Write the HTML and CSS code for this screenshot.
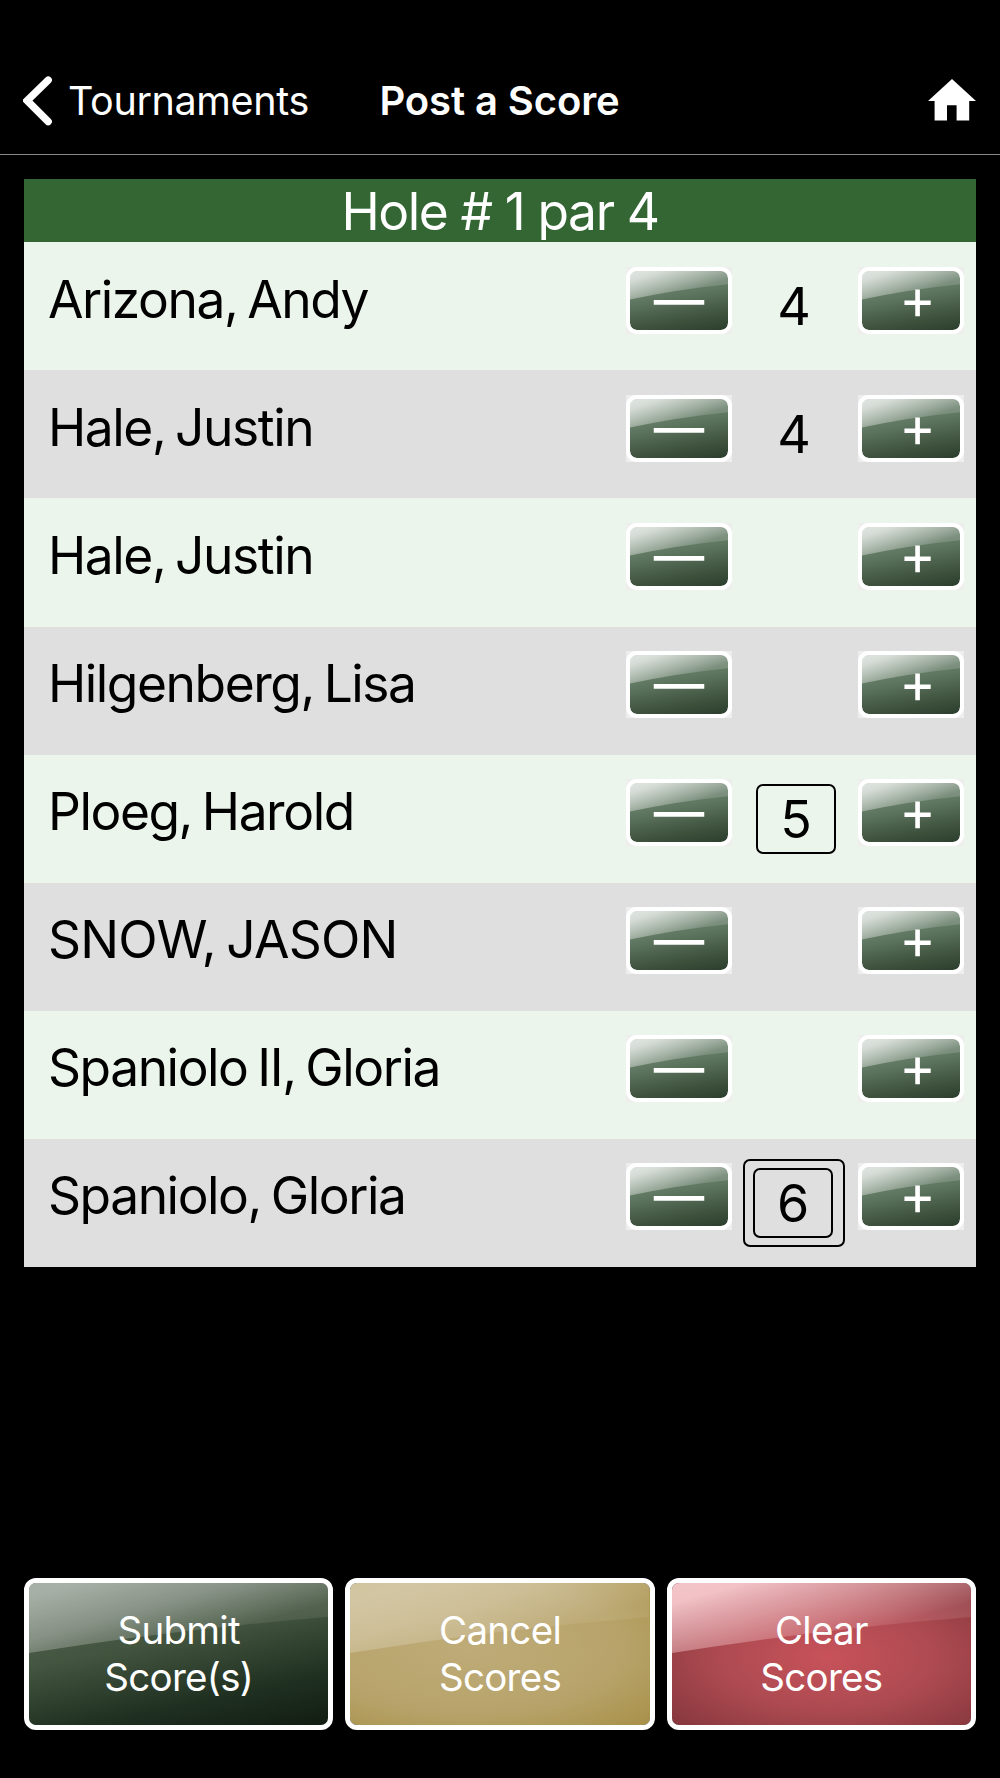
FILE: index.html
```html
<!DOCTYPE html>
<html lang="en">
<head>
    <meta charset="UTF-8">
    <meta name="viewport" content="width=device-width, initial-scale=1.0">
    <title>Post a Score</title>
    <link rel="stylesheet" href="styles.css">
</head>
<body>
    <!-- shared shapes -->
    <svg class="defs" width="0" height="0">
        <defs>
            <linearGradient id="shine" gradientUnits="userSpaceOnUse" x1="0" y1="0" x2="26" y2="95">
                <stop offset="0" stop-color="#fff" stop-opacity="0.8"/>
                <stop offset="0.15" stop-color="#fff" stop-opacity="0.78"/>
                <stop offset="0.55" stop-color="#fff" stop-opacity="0.56"/>
                <stop offset="1" stop-color="#fff" stop-opacity="0.14"/>
            </linearGradient>
            <linearGradient id="shine-pink" gradientUnits="userSpaceOnUse" x1="0" y1="0" x2="26" y2="95">
                <stop offset="0" stop-color="#facdd1" stop-opacity="0.94"/>
                <stop offset="0.2" stop-color="#facdd1" stop-opacity="0.92"/>
                <stop offset="0.55" stop-color="#f5c4c8" stop-opacity="0.62"/>
                <stop offset="1" stop-color="#f5c4c8" stop-opacity="0.14"/>
            </linearGradient>
            <linearGradient id="shine-small" gradientUnits="userSpaceOnUse" x1="0" y1="0" x2="12" y2="36">
                <stop offset="0" stop-color="#fff" stop-opacity="0.76"/>
                <stop offset="0.25" stop-color="#fff" stop-opacity="0.7"/>
                <stop offset="1" stop-color="#fff" stop-opacity="0.16"/>
            </linearGradient>
            <symbol id="gloss" viewBox="0 0 300 142" preserveAspectRatio="none">
                <path d="M0 0H300V34Q150 46 0 70Z" fill="url(#shine)"/>
            </symbol>
            <symbol id="gloss-pink" viewBox="0 0 300 142" preserveAspectRatio="none">
                <path d="M0 0H300V34Q150 46 0 70Z" fill="url(#shine-pink)"/>
            </symbol>
            <symbol id="gloss-small" viewBox="0 0 97 58" preserveAspectRatio="none">
                <path d="M0 0H97V13Q48 18 0 28Z" fill="url(#shine-small)"/>
            </symbol>
            <symbol id="dash" viewBox="0 0 97 58">
                <path d="M23.5 30.9H73.5" stroke="#fff" stroke-width="4.6"/>
            </symbol>
            <symbol id="cross" viewBox="0 0 97 58">
                <path d="M42 31.2H68M55 18V44.7" stroke="#fff" stroke-width="4.6"/>
            </symbol>
        </defs>
    </svg>

    <div class="topbar">
        <a class="back">
            <svg class="chevron" viewBox="0 0 30 50"><path d="M25.2 4.1L4.2 24.6L25.2 45.6" fill="none" stroke="#fff" stroke-width="7.4" stroke-linecap="round"/></svg>
            <span class="back-text">Tournaments</span>
        </a>
        <h1>Post a Score</h1>
        <svg class="home" viewBox="0 0 48 42"><path d="M24 0L48 22H41.2V41.5H28.6V26.3H19V41.5H6.6V22H0Z" fill="#fff"/></svg>
    </div>

    <div class="card">
        <h2>Hole # 1 par 4</h2>
        <div id="players"></div>
    </div>

    <div class="actions">
        <button class="action submit"><svg class="shine"><use href="#gloss"/></svg><span>Submit<br>Score(s)</span></button>
        <button class="action cancel"><svg class="shine"><use href="#gloss"/></svg><span>Cancel<br>Scores</span></button>
        <button class="action clear"><svg class="shine"><use href="#gloss-pink"/></svg><span>Clear<br>Scores</span></button>
    </div>

    <script src="script.js"></script>
</body>
</html>
```
FILE: styles.css
```css
* {
    box-sizing: border-box;
}

body {
    margin: 0;
    width: 1000px;
    height: 1778px;
    overflow: hidden;
    background-color: #000;
    color: #fff;
    font-family: Inter, "Liberation Sans", sans-serif;
    display: flex;
    flex-direction: column;
}

h1, h2 {
    margin: 0;
    font-weight: 400;
}

.defs {
    position: absolute;
}

/* top bar */
.topbar {
    height: 155px;
    padding: 47px 24px 0 23px;
    border-bottom: 1px solid #888;
    display: grid;
    grid-template-columns: 1fr auto 1fr;
    align-items: center;
}

.back {
    display: flex;
    align-items: center;
    height: 107px;
}

.chevron {
    width: 30px;
    height: 50px;
    flex: none;
}

.back-text {
    margin-left: 15px;
    font-size: 39.5px;
    letter-spacing: -0.35px;
}

h1 {
    font-size: 40px;
    font-weight: 600;
    letter-spacing: -0.1px;
}

.home {
    width: 48px;
    height: 42px;
    justify-self: end;
    margin-bottom: 1px;
}

/* score table */
.card {
    margin: 24px 24px 0;
}

h2 {
    height: 63.4px;
    background-color: #336633;
    font-size: 51.5px;
    line-height: 64px;
    letter-spacing: -1.4px;
    text-align: center;
}

.player {
    height: 128.05px;
    padding: 24.3px 12.5px 0 24px;
    background-color: #ebf5eb;
    color: #000;
    display: flex;
    align-items: flex-start;
}

.player:nth-child(even) {
    background-color: #dfdfdf;
}

.name {
    flex: 1;
    font-size: 51.5px;
    line-height: 64px;
    letter-spacing: -1.45px;
    word-spacing: -3.2px;
    white-space: nowrap;
}

.name.caps {
    letter-spacing: -0.8px;
}

.step {
    width: 106px;
    height: 67px;
    flex: none;
    background-color: #eee;
}

.step button {
    display: block;
    width: 106px;
    height: 67px;
    padding: 0;
    border: 4.5px solid #fff;
    border-radius: 11px;
    background: linear-gradient(170deg, #7d927e 0%, #5f7761 42%, #40543f 75%, #2c3d2d 100%) padding-box;
    overflow: hidden;
    position: relative;
}

.step svg, .shine {
    position: absolute;
    left: 0;
    top: 0;
    width: 100%;
    height: 100%;
}

.score {
    width: 126px;
    height: 80px;
    flex: none;
    display: flex;
    justify-content: center;
    padding-right: 1px;
    font-size: 52px;
    line-height: 79px;
}

.box, .double {
    width: 80px;
    height: 70px;
    margin: 5px 0 0 4px;
    border: 2px solid #000;
    border-radius: 7px;
    line-height: 67px;
    text-align: center;
}

.double {
    flex: none;
    width: 102px;
    height: 88px;
    margin: -4px 0 0;
    padding-right: 2px;
    line-height: 85px;
    position: relative;
}

.double::before {
    content: "";
    position: absolute;
    left: 8px;
    right: 10px;
    top: 7px;
    height: 66px;
    border: 2px solid #000;
    border-radius: 7px;
}

/* bottom buttons */
.actions {
    margin: auto 24px 48px;
    display: flex;
    gap: 12px;
}

.action {
    flex: 1;
    height: 152px;
    padding: 0;
    border: 5px solid #fff;
    border-radius: 12px;
    color: #fff;
    font-family: inherit;
    font-size: 38.5px;
    line-height: 47px;
    letter-spacing: -0.7px;
    position: relative;
    overflow: hidden;
}

.action span {
    position: relative;
}

.submit {
    background: linear-gradient(168deg, #5a6b5a 0%, #43543f 42%, #1f3021 75%, #121c12 100%) padding-box;
}

.submit .shine {
    opacity: 0.6;
}

.cancel {
    background: radial-gradient(ellipse at 40% 45%, #bfab78 0%, #b7a36a 60%, #a89048 100%) padding-box;
}

.cancel .shine {
    opacity: 0.5;
}

.clear {
    background: radial-gradient(ellipse at 52% 52%, #c8525a 0%, #ad4a51 50%, #82353b 100%) padding-box;
}
```
FILE: script.js
```js
const players = [
    { name: 'Arizona, Andy', score: 4 },
    { name: 'Hale, Justin', score: 4 },
    { name: 'Hale, Justin', score: '' },
    { name: 'Hilgenberg, Lisa', score: '' },
    { name: 'Ploeg, Harold', score: 5 },
    { name: 'SNOW, JASON', score: '' },
    { name: 'Spaniolo II, Gloria', score: '' },
    { name: 'Spaniolo, Gloria', score: 6 }
];
const par = 4;

// bogey gets a box, double bogey gets two
function scoreClass(score) {
    if (score === par + 1) return 'box';
    if (score === par + 2) return 'double';
    return '';
}

function step(icon) {
    return `<div class="step"><button><svg><use href="#gloss-small"/></svg><svg><use href="#${icon}"/></svg></button></div>`;
}

function printPlayers() {
    const container = document.getElementById('players');
    container.innerHTML = '';
    for (let i = 0; i < players.length; i++) {
        const name = players[i].name;
        const caps = name === name.toUpperCase() ? 'caps' : '';
        const row = document.createElement('div');
        row.classList.add('player');
        row.innerHTML = `
            <div class="name ${caps}">${name}</div>
            ${step('dash')}
            <div class="score"><span class="${scoreClass(players[i].score)}">${players[i].score}</span></div>
            ${step('cross')}`;
        container.appendChild(row);
    }
}

printPlayers();
```
